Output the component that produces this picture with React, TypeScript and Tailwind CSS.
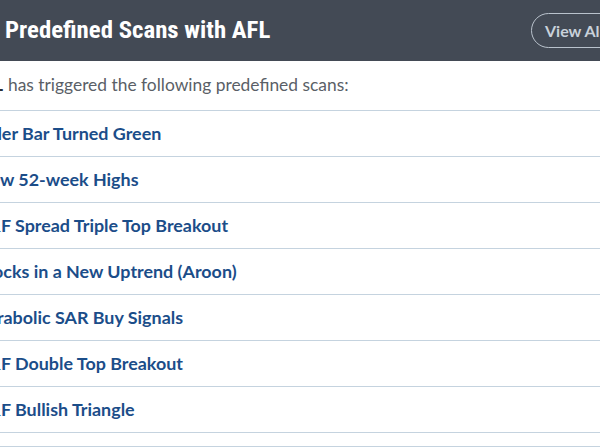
import React from "react";

const scans = [
  "Elder Bar Turned Green",
  "New 52-week Highs",
  "P&F Spread Triple Top Breakout",
  "Stocks in a New Uptrend (Aroon)",
  "Parabolic SAR Buy Signals",
  "P&F Double Top Breakout",
  "P&F Bullish Triangle",
];

export default function App() {
  return (
    <div className="w-[600px] h-[448px] overflow-hidden bg-white">
      <div className="w-[650px]">
        <div className="h-[61px] bg-[#434a55] flex items-center justify-between pl-[5px] pr-[15px]">
          <h1
            className="text-[24.8px] font-bold text-white leading-none"
            style={{ fontFamily: '"Roboto Condensed", "Liberation Sans Narrow", Roboto, sans-serif', fontStretch: "condensed" }}
          >
            Predefined Scans with AFL
          </h1>
          <a className="w-[104px] h-[35px] rounded-full border border-[#b9c2cc] flex items-center pl-[13px] text-[16px] font-bold text-[#c9d1da] font-['Lato',sans-serif]">
            View All
          </a>
        </div>
        <div className="font-['Lato',sans-serif]">
          <p className="-ml-[28px] h-[49px] flex items-center text-[17.4px] text-[#5a5f67]">
            <span className="font-bold text-[#2a2d33] mr-[5px]">AFL</span>
            has triggered the following predefined scans:
          </p>
          <ul>
            {scans.map((s) => (
              <li key={s} className="h-[46px] border-t border-[#c5d3df] flex items-center">
                <a className="-ml-[23px] text-[17.9px] font-bold text-[#1b4d89]">{s}</a>
              </li>
            ))}
          </ul>
          <div className="border-t border-[#c5d3df] h-[14px]" />
          <div className="border-t border-[#c5d3df] h-[20px]" />
        </div>
      </div>
    </div>
  );
}
